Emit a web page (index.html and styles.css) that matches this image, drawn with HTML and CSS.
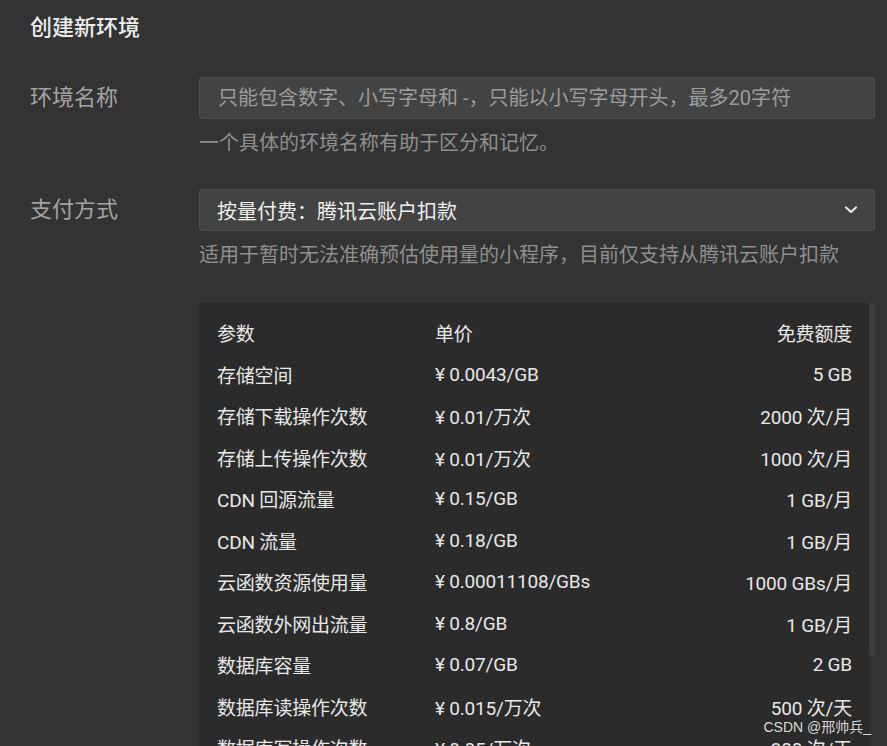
FILE: index.html
```html
<!DOCTYPE html>
<html lang="zh-CN">
<head>
  <meta charset="UTF-8" />
  <meta name="viewport" content="width=device-width, initial-scale=1.0"/>
  <title>创建新环境</title>
  <link rel="stylesheet" href="styles.css">
</head>
<body>
  <div class="dialog">
    <h1 class="dialog-title">创建新环境</h1>

    <div class="form-row">
      <label class="form-label" for="env-name">环境名称</label>
      <div class="form-field">
        <input type="text" id="env-name" class="text-input" placeholder="只能包含数字、小写字母和 -，只能以小写字母开头，最多20字符">
        <div class="form-help">一个具体的环境名称有助于区分和记忆。</div>
      </div>
    </div>

    <div class="form-row">
      <div class="form-label">支付方式</div>
      <div class="form-field">
        <div class="select-box">
          <span>按量付费：腾讯云账户扣款</span>
          <svg class="chevron" width="14" height="10" viewBox="0 0 14 10">
            <path d="M2 2.5 L7 7 L12 2.5" fill="none" stroke="#e8e8e8" stroke-width="2.2" stroke-linecap="round" stroke-linejoin="round"/>
          </svg>
        </div>
        <div class="form-help">适用于暂时无法准确预估使用量的小程序，目前仅支持从腾讯云账户扣款</div>

        <div class="price-wrap">
          <div class="price-panel">
            <table class="price-table">
              <thead>
                <tr><th>参数</th><th>单价</th><th>免费额度</th></tr>
              </thead>
              <tbody>
                <tr><td>存储空间</td><td>¥ 0.0043/GB</td><td>5 GB</td></tr>
                <tr><td>存储下载操作次数</td><td>¥ 0.01/万次</td><td>2000 次/月</td></tr>
                <tr><td>存储上传操作次数</td><td>¥ 0.01/万次</td><td>1000 次/月</td></tr>
                <tr><td>CDN 回源流量</td><td>¥ 0.15/GB</td><td>1 GB/月</td></tr>
                <tr><td>CDN 流量</td><td>¥ 0.18/GB</td><td>1 GB/月</td></tr>
                <tr><td>云函数资源使用量</td><td>¥ 0.00011108/GBs</td><td>1000 GBs/月</td></tr>
                <tr><td>云函数外网出流量</td><td>¥ 0.8/GB</td><td>1 GB/月</td></tr>
                <tr><td>数据库容量</td><td>¥ 0.07/GB</td><td>2 GB</td></tr>
                <tr><td>数据库读操作次数</td><td>¥ 0.015/万次</td><td>500 次/天</td></tr>
                <tr><td>数据库写操作次数</td><td>¥ 0.05/万次</td><td>300 次/天</td></tr>
              </tbody>
            </table>
          </div>
          <div class="scroll-thumb"></div>
        </div>
      </div>
    </div>
  </div>

  <div class="watermark">CSDN @邢帅兵_</div>
</body>
</html>
```

FILE: styles.css
```css
* {
  margin: 0;
  padding: 0;
  box-sizing: border-box;
}

html, body {
  height: 100%;
  overflow: hidden;
}

body {
  font-family: 'Roboto', 'Noto Sans CJK SC', sans-serif;
  background: #333333;
  color: #e6e6e6;
  position: relative;
}

.dialog {
  padding: 12px 12px 0 30px;
}

.dialog-title {
  font-size: 22px;
  font-weight: 500;
  line-height: 32px;
  color: #ececec;
  margin-bottom: 33px;
}

.form-row {
  display: flex;
  margin-bottom: 32px;
}

.form-label {
  width: 169px;
  flex-shrink: 0;
  font-size: 22px;
  line-height: 42px;
  color: #a3a3a3;
}

.form-field {
  flex: 1;
}

.text-input {
  display: block;
  width: 100%;
  height: 42px;
  padding: 0 18px;
  background: #434343;
  border: 1px solid #4e4e4e;
  border-radius: 3px;
  font-family: inherit;
  font-size: 20px;
  color: #eee;
  outline: none;
}

.text-input::placeholder {
  color: #9c9c9c;
}

.form-help {
  font-size: 20px;
  line-height: 28px;
  margin-top: 10px;
  color: #8f8f8f;
}

.select-box {
  display: flex;
  align-items: center;
  justify-content: space-between;
  height: 42px;
  padding: 0 16px 0 17px;
  background: #434343;
  border: 1px solid #4e4e4e;
  border-radius: 3px;
  font-size: 20px;
  color: #f0f0f0;
}

.chevron {
  display: block;
}

.price-wrap {
  display: flex;
  margin-top: 34px;
}

.price-panel {
  flex: 1;
  background: #2b2b2b;
  padding: 9px 17px 0 18px;
  height: 460px;
}

.scroll-thumb {
  width: 6px;
  height: 353px;
  background: #3d3d3d;
  border-radius: 3px;
}

.price-table {
  width: 100%;
  border-collapse: collapse;
  font-size: 19px;
  letter-spacing: -0.2px;
}

.price-table th,
.price-table td {
  height: 41.5px;
  padding: 0;
  text-align: left;
  font-weight: 400;
  color: #e8e8e8;
  white-space: nowrap;
}

.price-table th:first-child,
.price-table td:first-child {
  width: 218px;
}

.price-table th:last-child,
.price-table td:last-child {
  text-align: right;
}

.watermark {
  position: absolute;
  right: 16px;
  bottom: 10px;
  font-family: 'Liberation Sans', 'Noto Sans CJK SC', sans-serif;
  font-size: 14px;
  color: #dcdcdc;
  text-shadow: 0 0 2px #222;
}
```
